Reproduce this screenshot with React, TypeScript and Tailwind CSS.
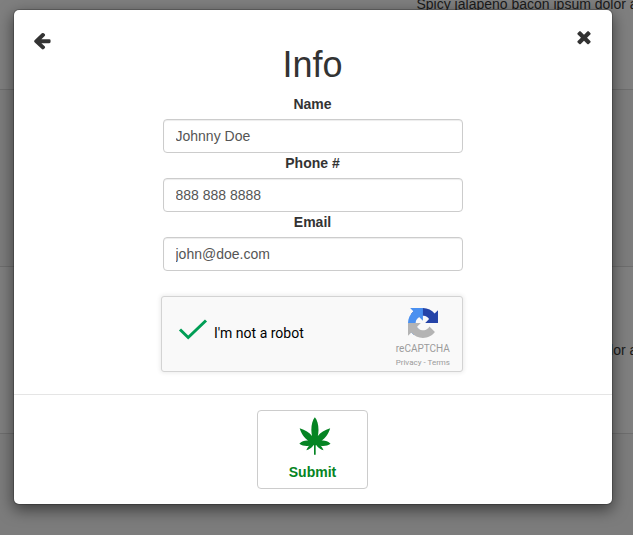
import React from "react";

function ArrowLeft() {
  return (
    <svg viewBox="0 0 1792 1792" className="h-[19px] w-5" preserveAspectRatio="none" fill="currentColor">
      <path d="M1664 896v128q0 53-32.5 90.5t-84.5 37.5h-704l293 294q38 36 38 90t-38 90l-75 76q-37 37-90 37-52 0-91-37l-651-652q-37-37-37-90 0-52 37-91l651-650q38-38 91-38 52 0 90 38l75 74q38 38 38 91t-38 91l-293 293h704q52 0 84.5 37.5t32.5 90.5z" />
    </svg>
  );
}

function Times() {
  return (
    <svg viewBox="0 0 1792 1792" className="h-5 w-5" fill="currentColor">
      <path d="M1490 1322q0 40-28 68l-136 136q-28 28-68 28t-68-28l-294-294-294 294q-28 28-68 28t-68-28l-136-136q-28-28-28-68t28-68l294-294-294-294q-28-28-28-68t28-68l136-136q28-28 68-28t68 28l294 294 294-294q28-28 68-28t68 28l136 136q28 28 28 68t-28 68l-294 294 294 294q28 28 28 68z" />
    </svg>
  );
}

function Leaf() {
  return (
    <svg viewBox="43 37 95 114" className="h-[38px] w-[31.700px]" fill="currentColor">
      <path d="M90.500 38c7 8 11 22 11 38 0 7-1 13-2 18 8-10 20-18 37-23-4 14-13 29-26 37 10-1 20 2 27 9-8 6-20 8-30 6 4 3 7 8 9 14-9-2-17-8-21-15h-2.500v28h-5v-28H86c-4 7-12 13-21 15 2-6 5-11 9-14-10 2-22 0-30-6 7-7 17-10 27-9C58 100 49 85 45 71c17 5 29 13 37 23-1-5-2-11-2-18 0-16 4-30 10.500-38z" />
    </svg>
  );
}

function RecaptchaLogo() {
  return (
    <svg viewBox="0 0 64 64" className="h-[30px] w-[30px]">
      <path fill="#2544a8" d="M64 31.955l-.033-1.37V4.687l-7.16 7.16C50.948 4.674 42.033.093 32.05.093c-10.4 0-19.622 4.96-25.458 12.64l11.736 11.86a15.55 15.55 0 0 1 4.754-5.334c2.05-1.6 4.952-2.906 8.968-2.906.485 0 .86.057 1.135.163 4.976.393 9.288 3.14 11.828 7.124l-8.307 8.307L64 31.953" />
      <path fill="#4a90f0" d="M31.862.094l-1.37.033H4.594l7.16 7.16C4.58 13.147 0 22.06 0 32.046c0 10.4 4.96 19.622 12.64 25.458L24.5 45.768a15.55 15.55 0 0 1-5.334-4.754c-1.6-2.05-2.906-4.952-2.906-8.968 0-.485.057-.86.163-1.135.393-4.976 3.14-9.288 7.124-11.828l8.307 8.307L31.86.095" />
      <path fill="#b4b4b4" d="M.001 32.045l.033 1.37v25.898l7.16-7.16c5.86 7.173 14.774 11.754 24.76 11.754 10.4 0 19.622-4.96 25.458-12.64l-11.736-11.86a15.55 15.55 0 0 1-4.754 5.334c-2.05 1.6-4.952 2.906-8.968 2.906-.485 0-.86-.057-1.135-.163-4.976-.393-9.288-3.14-11.828-7.124l8.307-8.307c-10.522.04-22.4.066-27.295-.005" />
    </svg>
  );
}

function Field({ label, value }: { label: string; value: string }) {
  return (
    <label className="block w-[300px] text-center">
      <span className="block h-[25px] text-sm leading-5 font-bold">{label}</span>
      <input
        defaultValue={value}
        className="block h-[34px] w-full rounded border border-[#ccc] bg-white px-3 py-1.5 text-sm leading-5 text-[#555] shadow-[inset_0_1px_1px_rgba(0,0,0,0.075)] outline-none"
      />
    </label>
  );
}

function Backdrop() {
  return (
    <div className="absolute inset-0 overflow-hidden bg-[#7f7f7f] text-sm leading-5 whitespace-nowrap text-[#1a1a1a]">
      <div className="h-[96px] border-b border-[#6e6e6e]">
        <p className="-mt-1.5 ml-[416.500px]">Spicy jalapeno bacon ipsum dolor a</p>
      </div>
      <div className="h-[177px] border-b border-[#6e6e6e] bg-[#7c7c7c]" />
      <div className="h-[167px] border-b border-[#6e6e6e] pt-[73px]">
        <p className="ml-[594.500px]">dolor a</p>
      </div>
      <div className="h-[102px] bg-[#7c7c7c]" />
    </div>
  );
}

export default function App() {
  return (
    <div className="relative h-[535px] w-[633px] overflow-hidden font-['Liberation_Sans',Arial,sans-serif] text-[#333]">
      <Backdrop />
      <main className="relative mt-[9px] ml-[12.500px] h-[496px] w-[600px] rounded-md border border-black/20 bg-white bg-clip-padding shadow-[0_5px_15px_rgba(0,0,0,0.5)]">
        <section className="h-[385px] border-b border-[#e5e5e5]">
          <div className="flex h-[35px] items-start justify-between pr-[17.500px] pl-[18.500px]">
            <button className="mt-[20.500px]"><ArrowLeft /></button>
            <button className="mt-[16.500px]"><Times /></button>
          </div>
          <h1 className="text-center text-4xl leading-10">Info</h1>
          <div className="mt-[9px] flex flex-col items-center">
            <Field label="Name" value="Johnny Doe" />
            <Field label="Phone #" value="888 888 8888" />
            <Field label="Email" value="john@doe.com" />
          </div>
          <div className="mt-[25px] ml-[147.500px] flex h-[76px] w-[302px] rounded-[3px] border border-[#d3d3d3] bg-[#f9f9f9] font-[Roboto,sans-serif] shadow-[0_0_4px_1px_rgba(0,0,0,0.08)]">
            <svg viewBox="0 0 30 24" className="mt-[21px] ml-4 h-6 w-[30px]" fill="none" stroke="#009e55" strokeWidth="3">
              <path d="M2 11.500 10.200 19.500 28 2.500" />
            </svg>
            <span className="mt-[26px] ml-1.5 text-sm leading-5 text-black">I'm not a robot</span>
            <div className="mt-[11px] mr-3 ml-auto flex flex-col items-center text-[#9b9b9b]">
              <RecaptchaLogo />
              <span className="mt-[5px] text-[10px] leading-3">reCAPTCHA</span>
              <span className="mt-[3px] text-[8px] leading-[10px]">Privacy - Terms</span>
            </div>
          </div>
        </section>
        <footer className="flex justify-center pt-[15px]">
          <button className="flex h-[79px] w-[111px] flex-col items-center rounded border border-[#ccc] bg-white pt-1.5 text-sm font-bold text-[#058423]">
            <span className="flex h-[39px] w-[37px] justify-end"><Leaf /></span>
            <span className="mt-[6px] leading-5">Submit</span>
          </button>
        </footer>
      </main>
    </div>
  );
}
